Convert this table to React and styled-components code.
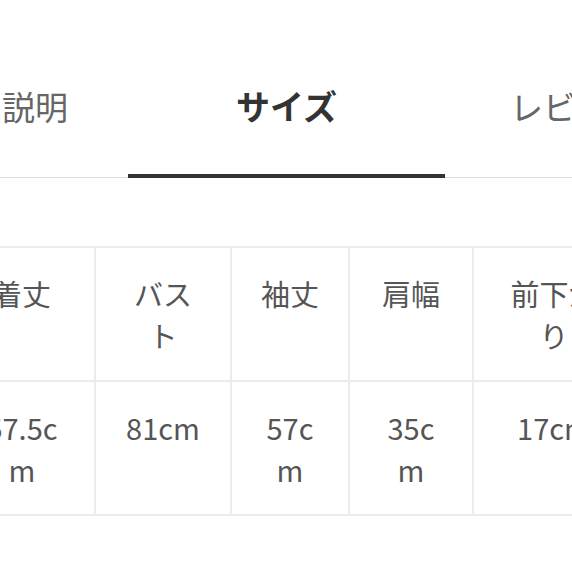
import React from 'react';
import styled, { createGlobalStyle } from 'styled-components';

const GlobalStyle = createGlobalStyle`
  body {
    margin: 0;
    background: #fff;
    font-family: "Noto Sans CJK JP", "Noto Sans", sans-serif;
  }
`;

const Page = styled.div`
  width: 572px;
  height: 572px;
  overflow: hidden;
  padding-top: 60px;
  box-sizing: border-box;
`;

const TabBar = styled.div`
  display: flex;
  width: 820px;
  margin-left: -124px;
  height: 118px;
  box-shadow: inset 0 -1px 0 #dcdcdc;
`;

const Tab = styled.div`
  flex: none;
  box-sizing: border-box;
  width: ${(p) => p.$width}px;
  height: 118px;
  padding-top: 23px;
  text-align: center;
  font-size: ${(p) => (p.$active ? 34 : 33)}px;
  line-height: 46px;
  font-weight: ${(p) => (p.$active ? 700 : 400)};
  color: ${(p) => (p.$active ? '#333' : '#666')};
  border-bottom: 4px solid ${(p) => (p.$active ? '#333' : 'transparent')};
`;

const SizeTable = styled.div`
  display: grid;
  grid-template-columns: 146px 136px 118px 124px 162px;
  width: max-content;
  margin: 68px 0 0 -52px;
  border-top: 2px solid #ebebeb;
  border-left: 2px solid #ebebeb;
`;

const Cell = styled.div`
  padding: 24px 0;
  border-right: 2px solid #ebebeb;
  border-bottom: 2px solid #ebebeb;
  text-align: center;
  font-size: 29px;
  line-height: 42px;
  color: #555;
  min-height: 84px;
`;

const Line = styled.span`
  display: block;
  white-space: nowrap;
`;

const tabs = [
  { label: '商品説明', width: 252 },
  { label: 'サイズ', width: 317, active: true },
  { label: 'レビュー', width: 262 },
];

const rows = [
  [['着丈'], ['バス', 'ト'], ['袖丈'], ['肩幅'], ['前下が', 'り']],
  [['57.5c', 'm'], ['81cm'], ['57c', 'm'], ['35c', 'm'], ['17cm']],
];

export default function App() {
  return (
    <Page>
      <GlobalStyle />
      <TabBar>
        {tabs.map((t) => (
          <Tab key={t.label} $width={t.width} $active={t.active}>
            {t.label}
          </Tab>
        ))}
      </TabBar>
      <SizeTable>
        {rows.map((row, r) =>
          row.map((lines, c) => (
            <Cell key={`${r}-${c}`}>
              {lines.map((l) => (
                <Line key={l}>{l}</Line>
              ))}
            </Cell>
          ))
        )}
      </SizeTable>
    </Page>
  );
}
